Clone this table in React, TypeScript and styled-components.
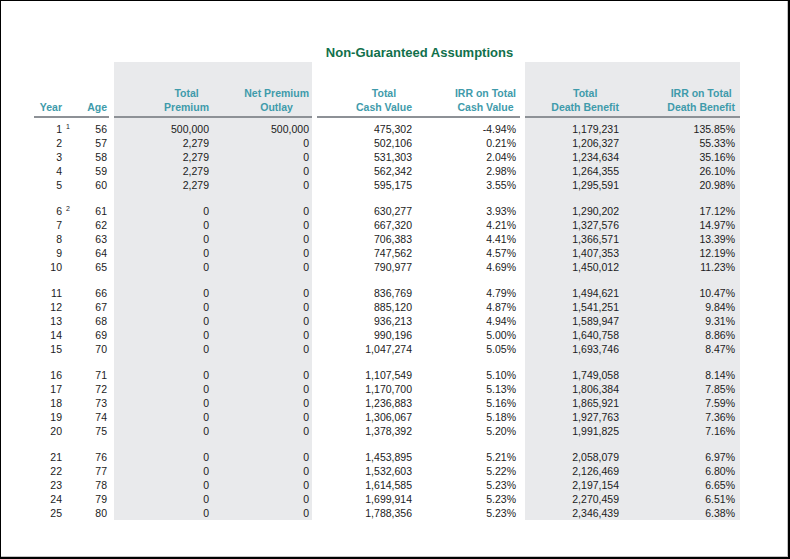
import React from 'react';
import styled, { createGlobalStyle } from 'styled-components';

const GlobalStyle = createGlobalStyle`
  html, body {
    margin: 0;
    padding: 0;
    background: #fff;
  }
  body {
    font-family: "Liberation Sans", Arial, sans-serif;
  }
`

const Frame = styled.div`
  box-sizing: border-box;
  width: 790px;
  height: 559px;
  border: 1px solid #000;
  border-right-width: 2px;
  border-bottom-width: 2px;
  box-shadow: inset -1px -1px 0 #c4c4c4;
  padding: 44px 0 0 33px;
  background: #fff;
`

const Title = styled.div`
  box-sizing: border-box;
  width: 707px;
  padding-left: 64px;
  text-align: center;
  font-size: 13px;
  font-weight: 700;
  line-height: 16px;
  color: #11704b;
`

const Table = styled.div`
  display: flex;
  align-items: flex-start;
  gap: 5px;
  margin-top: 1px;
`

const Section = styled.div<{ $shaded?: boolean; $pad: number }>`
  box-sizing: border-box;
  display: flex;
  flex-direction: column;
  padding: 24px ${p => p.$pad}px 0 0;
  background: ${p => (p.$shaded ? '#e9eaec' : 'transparent')};
`

const ColumnGrid = styled.div<{ $cols: string }>`
  display: grid;
  grid-template-columns: ${p => p.$cols};
`

const HeaderCell = styled.div`
  height: 28px;
  display: flex;
  align-items: flex-end;
  justify-content: flex-end;
`

const HeaderLabel = styled.span`
  display: inline-block;
  text-align: center;
  font-size: 10.5px;
  font-weight: 700;
  line-height: 14px;
  color: #3f9bab;
  white-space: nowrap;
`

const Rule = styled.div<{ $extra: number }>`
  height: 2px;
  margin: 2px -${p => p.$extra}px 4px 0;
  background: #8d9196;
`

const Body = styled.div`
  display: flex;
  flex-direction: column;
  gap: 12px;
`

const Cell = styled.div`
  position: relative;
  height: 14px;
  line-height: 14px;
  font-size: 10.5px;
  color: #1b1b1b;
  text-align: right;
  white-space: nowrap;
`

const Value = styled.span`
  position: relative;
`

const Note = styled.span`
  position: absolute;
  left: 100%;
  top: 0;
  margin-left: 4px;
  font-size: 7px;
  line-height: 7px;
  vertical-align: baseline;
`

type Row = [number, number, string, string, string, string, string, string];

const rows: Row[] = [
  [1, 56, '500,000', '500,000', '475,302', '-4.94%', '1,179,231', '135.85%'],
  [2, 57, '2,279', '0', '502,106', '0.21%', '1,206,327', '55.33%'],
  [3, 58, '2,279', '0', '531,303', '2.04%', '1,234,634', '35.16%'],
  [4, 59, '2,279', '0', '562,342', '2.98%', '1,264,355', '26.10%'],
  [5, 60, '2,279', '0', '595,175', '3.55%', '1,295,591', '20.98%'],
  [6, 61, '0', '0', '630,277', '3.93%', '1,290,202', '17.12%'],
  [7, 62, '0', '0', '667,320', '4.21%', '1,327,576', '14.97%'],
  [8, 63, '0', '0', '706,383', '4.41%', '1,366,571', '13.39%'],
  [9, 64, '0', '0', '747,562', '4.57%', '1,407,353', '12.19%'],
  [10, 65, '0', '0', '790,977', '4.69%', '1,450,012', '11.23%'],
  [11, 66, '0', '0', '836,769', '4.79%', '1,494,621', '10.47%'],
  [12, 67, '0', '0', '885,120', '4.87%', '1,541,251', '9.84%'],
  [13, 68, '0', '0', '936,213', '4.94%', '1,589,947', '9.31%'],
  [14, 69, '0', '0', '990,196', '5.00%', '1,640,758', '8.86%'],
  [15, 70, '0', '0', '1,047,274', '5.05%', '1,693,746', '8.47%'],
  [16, 71, '0', '0', '1,107,549', '5.10%', '1,749,058', '8.14%'],
  [17, 72, '0', '0', '1,170,700', '5.13%', '1,806,384', '7.85%'],
  [18, 73, '0', '0', '1,236,883', '5.16%', '1,865,921', '7.59%'],
  [19, 74, '0', '0', '1,306,067', '5.18%', '1,927,763', '7.36%'],
  [20, 75, '0', '0', '1,378,392', '5.20%', '1,991,825', '7.16%'],
  [21, 76, '0', '0', '1,453,895', '5.21%', '2,058,079', '6.97%'],
  [22, 77, '0', '0', '1,532,603', '5.22%', '2,126,469', '6.80%'],
  [23, 78, '0', '0', '1,614,585', '5.23%', '2,197,154', '6.65%'],
  [24, 79, '0', '0', '1,699,914', '5.23%', '2,270,459', '6.51%'],
  [25, 80, '0', '0', '1,788,356', '5.23%', '2,346,439', '6.38%'],
];

const notes: Record<number, string> = { 1: '1', 6: '2' };

interface ISection {
  shaded: boolean;
  widths: number[];
  pad: number;
  start: number;
  headers: string[][];
}

const sections: ISection[] = [
  { shaded: false, widths: [28, 45], pad: 2, start: 0, headers: [['Year'], ['Age']] },
  { shaded: true, widths: [95, 100], pad: 3, start: 2, headers: [['Total', 'Premium'], ['Net Premium', 'Outlay']] },
  { shaded: false, widths: [95, 104], pad: 4, start: 4, headers: [['Total', 'Cash Value'], ['IRR on Total', 'Cash Value']] },
  { shaded: true, widths: [94, 116], pad: 5, start: 6, headers: [['Total', 'Death Benefit'], ['IRR on Total', 'Death Benefit']] },
];

// five years per block, with a gap between blocks
const groups = [0, 5, 10, 15, 20].map(i => rows.slice(i, i + 5));

const App = () => {
  return (
    <>
      <GlobalStyle />
      <Frame>
        <Title>Non-Guaranteed Assumptions</Title>
        <Table>
          {sections.map((s, si) => {
            const cols = s.widths.map(w => `${w}px`).join(' ');
            return (
              <Section key={si} $shaded={s.shaded} $pad={s.pad}>
                <ColumnGrid $cols={cols}>
                  {s.headers.map((h, hi) => (
                    <HeaderCell key={hi}>
                      <HeaderLabel>
                        {h.map((line, li) => (
                          <React.Fragment key={li}>
                            {li > 0 && <br />}
                            {line}
                          </React.Fragment>
                        ))}
                      </HeaderLabel>
                    </HeaderCell>
                  ))}
                </ColumnGrid>
                <Rule $extra={s.pad} />
                <Body>
                  {groups.map((g, gi) => (
                    <ColumnGrid key={gi} $cols={cols}>
                      {g.map(r =>
                        s.widths.map((_, ci) => {
                          const value = r[s.start + ci];
                          const note = si === 0 && ci === 0 ? notes[r[0]] : undefined;
                          return (
                            <Cell key={`${r[0]}-${ci}`}>
                              <Value>
                                {value}
                                {note && <Note>{note}</Note>}
                              </Value>
                            </Cell>
                          );
                        })
                      )}
                    </ColumnGrid>
                  ))}
                </Body>
              </Section>
            );
          })}
        </Table>
      </Frame>
    </>
  );
};

export default App;
